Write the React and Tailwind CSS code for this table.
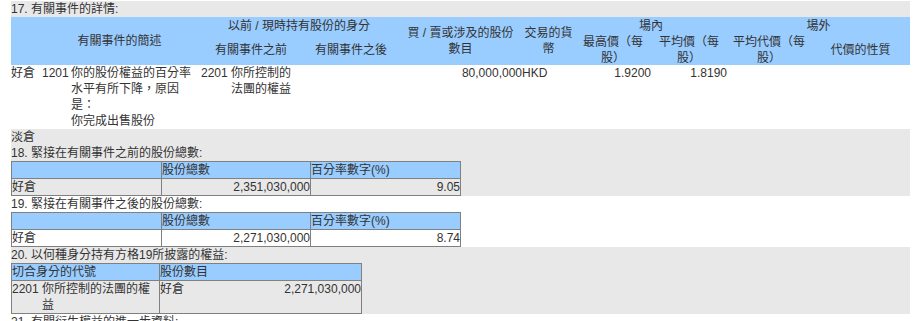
export default function App() {
  return (
    <div className="min-h-screen bg-white font-['Liberation_Sans','Noto_Sans_CJK_TC',sans-serif] text-[12px] leading-[16px] text-[#333]">
      <div className="ml-[11px] mt-px w-[899px]">
        {/* 17 */}
        <div className="bg-[#e8e8e8]">17. 有關事件的詳情:</div>
        <div className="bg-white">
          <div className="grid grid-cols-[29px_159px_104px_96px_123px_53px_76px_76px_84px_99px] grid-rows-[17px_31px] bg-[#99ccff] whitespace-nowrap">
            <div className="row-span-2" />
            <div className="row-span-2 flex items-center justify-center">有關事件的簡述</div>
            <div className="col-span-2 flex items-center justify-center">以前 / 現時持有股份的身分</div>
            <div className="row-span-2 flex items-center justify-center text-center">買 / 賣或涉及的股份<br />數目</div>
            <div className="row-span-2 flex items-center justify-center text-center">交易的貨<br />幣</div>
            <div className="col-span-2 flex items-center justify-center">場內</div>
            <div className="col-span-2 flex items-center justify-center">場外</div>
            <div className="flex items-center justify-center">有關事件之前</div>
            <div className="flex items-center justify-center">有關事件之後</div>
            <div className="flex items-center justify-center text-center">最高價（每<br />股）</div>
            <div className="flex items-center justify-center text-center">平均價（每<br />股）</div>
            <div className="flex items-center justify-center text-center">平均代價（每<br />股）</div>
            <div className="flex items-center justify-center">代價的性質</div>
          </div>
          <div className="grid h-[64px] grid-cols-[29px_159px_104px_96px_123px_53px_76px_76px_84px_99px] whitespace-nowrap">
            <div>好倉</div>
            <div className="flex">
              <div className="w-[31px] pl-[2px]">1201</div>
              <div>你的股份權益的百分率<br />水平有所下降，原因<br />是：<br />你完成出售股份</div>
            </div>
            <div className="flex">
              <div className="w-[32px] pl-[2px]">2201</div>
              <div>你所控制的<br />法團的權益</div>
            </div>
            <div />
            <div className="text-right">80,000,000</div>
            <div>HKD</div>
            <div className="text-right">1.9200</div>
            <div className="text-right">1.8190</div>
            <div />
            <div />
          </div>
        </div>

        {/* 18 */}
        <div className="bg-[#e8e8e8]">
          <div>淡倉</div>
          <div>18. 緊接在有關事件之前的股份總數:</div>
          <div className="grid w-[450px] grid-cols-[149px_148px_149px] grid-rows-[16px_16px] gap-px border border-[#808080] bg-[#808080] whitespace-nowrap">
            <div className="bg-[#99ccff]" />
            <div className="bg-[#99ccff]">股份總數</div>
            <div className="bg-[#99ccff]">百分率數字(%)</div>
            <div className="bg-[#e8e8e8]">好倉</div>
            <div className="bg-[#e8e8e8] text-right">2,351,030,000</div>
            <div className="bg-[#e8e8e8] text-right">9.05</div>
          </div>
        </div>

        {/* 19 */}
        <div className="bg-white">
          <div>19. 緊接在有關事件之後的股份總數:</div>
          <div className="grid w-[450px] grid-cols-[149px_148px_149px] grid-rows-[16px_16px] gap-px border border-[#808080] bg-[#808080] whitespace-nowrap">
            <div className="bg-[#99ccff]" />
            <div className="bg-[#99ccff]">股份總數</div>
            <div className="bg-[#99ccff]">百分率數字(%)</div>
            <div className="bg-white">好倉</div>
            <div className="bg-white text-right">2,271,030,000</div>
            <div className="bg-white text-right">8.74</div>
          </div>
        </div>

        {/* 20 */}
        <div className="bg-[#e8e8e8]">
          <div>20. 以何種身分持有方格19所披露的權益:</div>
          <div className="grid w-[351px] grid-cols-[147px_201px] grid-rows-[16px_32px] gap-px border border-[#808080] bg-[#808080] whitespace-nowrap">
            <div className="bg-[#99ccff]">切合身分的代號</div>
            <div className="bg-[#99ccff]">股份數目</div>
            <div className="flex bg-[#e8e8e8]">
              <div className="w-[30px]">2201</div>
              <div>你所控制的法團的權<br />益</div>
            </div>
            <div className="flex justify-between bg-[#e8e8e8]">
              <div>好倉</div>
              <div>2,271,030,000</div>
            </div>
          </div>
        </div>

        {/* 21 */}
        <div className="bg-white">21. 有關衍生權益的進一步資料:</div>
      </div>
    </div>
  );
}
